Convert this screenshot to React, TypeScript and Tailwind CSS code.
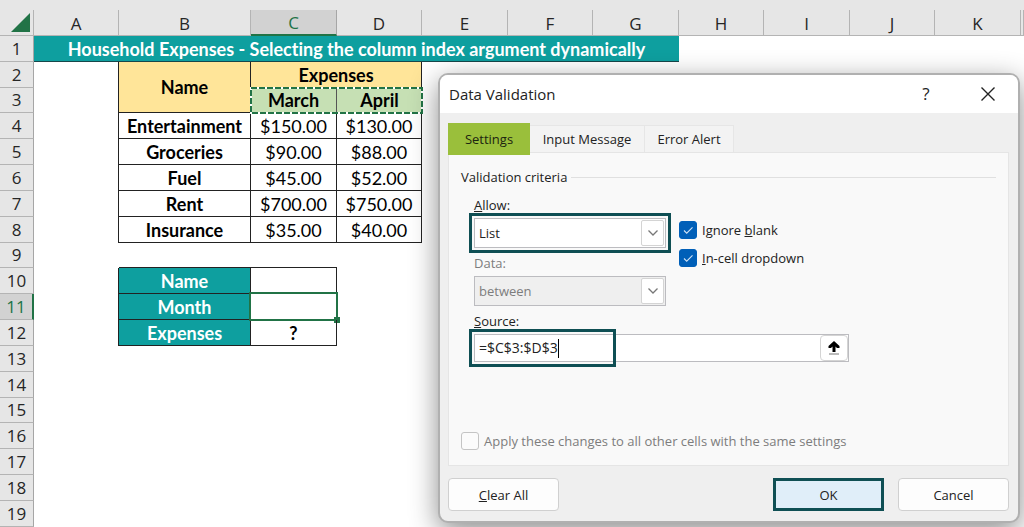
import * as React from 'react';
import { useState } from 'react';
import clsx from 'clsx';

const COLUMNS = [
  { name: 'A', width: 'w-[85px]' },
  { name: 'B', width: 'w-[132px]' },
  { name: 'C', width: 'w-[86px]' },
  { name: 'D', width: 'w-[85px]' },
  { name: 'E', width: 'w-[86px]' },
  { name: 'F', width: 'w-[85px]' },
  { name: 'G', width: 'w-[86px]' },
  { name: 'H', width: 'w-[85px]' },
  { name: 'I', width: 'w-[86px]' },
  { name: 'J', width: 'w-[85px]' },
  { name: 'K', width: 'w-[86px]' },
  { name: '', width: 'w-auto' },
];

const EXPENSES: Record<number, [string, string, string]> = {
  4: ['Entertainment', '$150.00', '$130.00'],
  5: ['Groceries', '$90.00', '$88.00'],
  6: ['Fuel', '$45.00', '$52.00'],
  7: ['Rent', '$700.00', '$750.00'],
  8: ['Insurance', '$35.00', '$40.00'],
};

const LOOKUP: Record<number, [string, string]> = {
  10: ['Name', ''],
  11: ['Month', ''],
  12: ['Expenses', '?'],
};

const line = 'border-r border-b border-[#222]';

function RowCells({ row }: { row: number }) {
  if (row === 1) {
    return (
      <>
        <td colSpan={7} className="border-b border-[#17474a] bg-[#0e9f9f] p-0 text-center font-bold text-white">
          Household Expenses - Selecting the column index argument dynamically
        </td>
        <td colSpan={5} />
      </>
    );
  }
  if (row === 2) {
    return (
      <>
        <td className="border-r border-[#222]" />
        <td rowSpan={2} className={clsx(line, 'bg-[#ffe599] p-0 font-bold')}>Name</td>
        <td colSpan={2} className="border-r border-[#222] bg-[#ffe599] p-0 font-bold">Expenses</td>
        <td colSpan={8} />
      </>
    );
  }
  if (row === 3) {
    return (
      <>
        <td className="border-r border-[#222]" />
        <td colSpan={2} className="relative p-0 font-bold">
          <div className="flex h-full bg-[#c6e0b4]">
            <span className="h-[25px] flex-1 border-r border-[#555]">March</span>
            <span className="h-[25px] flex-1">April</span>
          </div>
          {/* marching ants around the copied range */}
          <svg className="absolute inset-0 h-full w-full overflow-visible" aria-hidden="true">
            <rect width="100%" height="100%" fill="none" stroke="#fff" strokeWidth="2" />
            <rect width="100%" height="100%" fill="none" stroke="#217346" strokeWidth="2" strokeDasharray="6 2" />
          </svg>
        </td>
        <td colSpan={8} />
      </>
    );
  }
  if (EXPENSES[row]) {
    const [name, march, april] = EXPENSES[row];
    return (
      <>
        <td className="border-r border-[#222]" />
        <td className={clsx(line, 'p-0 font-bold')}>{name}</td>
        <td className={clsx(line, 'p-0')}>{march}</td>
        <td className={clsx(line, 'p-0')}>{april}</td>
        <td colSpan={8} />
      </>
    );
  }
  if (LOOKUP[row]) {
    const [name, value] = LOOKUP[row];
    return (
      <>
        <td className="border-r border-[#222]" />
        <td className={clsx(line, 'bg-[#0e9f9f] p-0 font-bold text-white')}>{name}</td>
        <td className={clsx(line, 'relative p-0 font-bold')}>
          {value}
          {row === 11 && (
            <span className="absolute -inset-x-0.5 -top-0.5 -bottom-0.5 border-2 border-[#217346]">
              <span className="absolute -right-1 -bottom-1 size-1.5 bg-[#217346]" />
            </span>
          )}
        </td>
        <td colSpan={9} />
      </>
    );
  }
  if (row === 9) {
    return (
      <>
        <td />
        <td colSpan={2} className="border-b border-[#222]" />
        <td colSpan={9} />
      </>
    );
  }
  return <td colSpan={12} />;
}

function Sheet() {
  return (
    <div className="overflow-hidden bg-[#e6e6e6] pt-[10px]">
      <table className="w-full table-fixed border-separate border-spacing-0 bg-white text-center font-['Lato',sans-serif] text-[18px] leading-6 text-black [font-variant-ligatures:none]">
        <colgroup>
          <col className="w-[34px]" />
          {COLUMNS.map(col => (
            <col key={col.name} className={col.width} />
          ))}
        </colgroup>
        <thead className="font-['Open_Sans',sans-serif] text-[17px]">
          <tr className="h-[26px] bg-[#e6e6e6]">
            <th className="border-r border-b border-[#b4b4b4] p-0">
              <svg className="mr-[3px] ml-auto size-[19px]" viewBox="0 0 19 19" aria-hidden="true">
                <path d="M19 0V19H0Z" fill="#217346" />
              </svg>
            </th>
            {COLUMNS.map(col => (
              <th
                key={col.name}
                scope="col"
                className={clsx(
                  'border-r px-0 pt-0.5 pb-0 leading-[22px] font-normal',
                  col.name === 'C'
                    ? 'border-b-2 border-r-[#a6a6a6] border-b-[#217346] bg-[#d2d2d2] text-[#217346]'
                    : 'border-b border-[#b4b4b4] text-[#262626]'
                )}
              >
                {col.name}
              </th>
            ))}
          </tr>
        </thead>
        <tbody>
          {Array.from({ length: 19 }, (_, i) => i + 1).map(row => (
            <tr key={row} className={row % 6 === 3 ? 'h-[25px]' : 'h-[26px]'}>
              <th
                scope="row"
                className={clsx(
                  "border-b border-b-[#b4b4b4] p-0 font-['Open_Sans',sans-serif] text-[17px] font-normal",
                  row === 11
                    ? 'border-r-2 border-r-[#217346] bg-[#d2d2d2] text-[#217346]'
                    : 'border-r border-r-[#a6a6a6] bg-[#e6e6e6] text-[#262626]'
                )}
              >
                {row}
              </th>
              <RowCells row={row} />
            </tr>
          ))}
        </tbody>
      </table>
    </div>
  );
}

function DropDown({ id, options, disabled, highlighted }: { id: string; options: string[]; disabled?: boolean; highlighted?: boolean }) {
  return (
    <div className={clsx('relative w-48', highlighted && 'outline-3 outline-offset-2 outline-[#0f4f54]')}>
      <select
        id={id}
        disabled={disabled}
        className={clsx(
          'block h-[30px] w-full appearance-none border border-[#bcbcc0] pl-1 opacity-100',
          disabled ? 'bg-[#efefef] text-[#7d7d7d]' : 'bg-white text-[#222]'
        )}
      >
        {options.map(option => (
          <option key={option}>{option}</option>
        ))}
      </select>
      <span className="pointer-events-none absolute top-0.5 right-0.5 bottom-0.5 flex w-[23px] items-center justify-center rounded-xs border border-[#d4d4d4] bg-white">
        <svg className="h-[6px] w-[10px]" viewBox="0 0 10 6" fill="none" stroke="#777" strokeWidth="1.3" aria-hidden="true">
          <path d="M0.5 0.5L5 5L9.5 0.5" />
        </svg>
      </span>
    </div>
  );
}

function CheckBox({ id, children, disabled, defaultChecked }: { id: string; children: React.ReactNode; disabled?: boolean; defaultChecked?: boolean }) {
  return (
    <label htmlFor={id} className={clsx('flex items-center gap-[5px]', disabled && 'text-[#7d7d7d]')}>
      <span className="relative size-[18px]">
        <input
          id={id}
          type="checkbox"
          disabled={disabled}
          defaultChecked={defaultChecked}
          className="peer block size-[18px] appearance-none rounded-[3px] border border-[#c4c4c4] bg-[#fbfbfb] checked:border-[#005fb8] checked:bg-[#005fb8]"
        />
        <svg
          className="pointer-events-none absolute inset-0 hidden size-[18px] peer-checked:block"
          viewBox="0 0 18 18"
          fill="none"
          stroke="#cfe2f5"
          strokeWidth="1.1"
          aria-hidden="true"
        >
          <path d="M5 9.5L7.7 12.2L13.5 6.3" />
        </svg>
      </span>
      <span className="pt-px">{children}</span>
    </label>
  );
}

function DialogButton({ children, primary }: { children: React.ReactNode; primary?: boolean }) {
  return (
    <button
      type="button"
      className={clsx(
        'h-[33px] w-[111px]',
        primary ? 'border-[3px] border-[#0f4f54] bg-[#e0eef9]' : 'rounded-sm border border-[#d0d0d0] bg-[#fdfdfd]'
      )}
    >
      {children}
    </button>
  );
}

function DataValidationDialog() {
  const [source, setSource] = useState('=$C$3:$D$3');
  return (
    <div
      role="dialog"
      aria-labelledby="dialog-title"
      className="absolute top-[73px] right-1 w-[582px] overflow-hidden rounded-[10px] border-2 border-[#b0b0b0] bg-[#efefef] font-['Open_Sans',sans-serif] text-[13px] leading-5 text-[#222] shadow-[0_8px_28px_rgba(0,0,0,0.45)]"
    >
      <header className="flex h-[38px] items-center bg-white pr-[23px] pl-[9px]">
        <h1 id="dialog-title" className="flex-1 text-[15px]">Data Validation</h1>
        <button type="button" className="w-4 text-[17px]">?</button>
        <button type="button" aria-label="Close" className="ml-[47px]">
          <svg className="size-[14px]" viewBox="0 0 14 14" stroke="#222" strokeWidth="1.4" aria-hidden="true">
            <path d="M0.5 0.5L13.5 13.5M13.5 0.5L0.5 13.5" />
          </svg>
        </button>
      </header>

      <div className="pt-[10px] pr-[9px] pb-[10px] pl-2">
        <div role="tablist" className="relative z-10 flex items-end">
          <button type="button" role="tab" aria-selected="true" className="-mb-[3px] h-8 w-[82px] bg-[#9abf3b] text-[#1c2410]">
            Settings
          </button>
          <button type="button" role="tab" className="h-[27px] w-[115px] border-t border-r border-[#e6e6e6] bg-[#f3f3f3]">
            Input Message
          </button>
          <button type="button" role="tab" className="h-[27px] w-[89px] border-t border-r border-[#e6e6e6] bg-[#f3f3f3]">
            Error Alert
          </button>
        </div>

        <div role="tabpanel" className="mb-3 border border-[#e5e5e5] bg-[#f9f9f9] px-3 pt-[14px] pb-[14px]">
          <div className="flex items-center gap-1">
            <h2>Validation criteria</h2>
            <hr className="flex-1 border-[#e0e0e0]" />
          </div>

          <div className="mt-2 flex gap-[13px] pl-[13px]">
            <div className="flex flex-col gap-[5px]">
              <div className="flex flex-col gap-[3px]">
                <label htmlFor="allow"><u>A</u>llow:</label>
                <DropDown id="allow" options={['List', 'Any value', 'Whole number']} highlighted />
              </div>
              <div className="flex flex-col gap-[3px]">
                <label htmlFor="data" className="text-[#7d7d7d]">Data:</label>
                <DropDown id="data" options={['between', 'not between']} disabled />
              </div>
            </div>
            <div className="flex flex-col gap-[7px] pt-6">
              <CheckBox id="ignore-blank" defaultChecked>Ignore <u>b</u>lank</CheckBox>
              <CheckBox id="in-cell" defaultChecked><u>I</u>n-cell dropdown</CheckBox>
            </div>
          </div>

          <div className="mt-[5px] flex flex-col gap-[3px] pl-[13px]">
            <label htmlFor="source"><u>S</u>ource:</label>
            <div className="relative flex h-7 w-[375px] border border-[#bcbcc0] bg-white">
              <div className="flex flex-1 items-center pl-1 text-[14px]">
                <input
                  id="source"
                  value={source}
                  onChange={e => setSource(e.target.value)}
                  className="field-sizing-content bg-transparent outline-none"
                />
                <span className="h-[19px] w-px bg-black" />
              </div>
              <button type="button" aria-label="Collapse dialog" className="flex w-7 items-center justify-center rounded-sm border border-[#d4d4d4] bg-white">
                <svg className="h-[14px] w-[12px]" viewBox="0 0 12 14" aria-hidden="true">
                  <path d="M6 0L11.5 5V7H9L7.5 5.5V11H4.5V5.5L3 7H0.5V5Z" fill="#000" />
                  <path d="M1 13H11" stroke="#777" />
                </svg>
              </button>
              <span className="pointer-events-none absolute -top-1.5 -left-1.5 h-[38px] w-[147px] border-3 border-[#0f4f54]" />
            </div>
          </div>

          <div className="mt-[68px]">
            <CheckBox id="apply-all" disabled>Apply these changes to all other cells with the same settings</CheckBox>
          </div>
        </div>

        <div className="flex gap-[14px]">
          <DialogButton><u>C</u>lear All</DialogButton>
          <div className="flex-1" />
          <DialogButton primary>OK</DialogButton>
          <DialogButton>Cancel</DialogButton>
        </div>
      </div>
    </div>
  );
}

export default function App() {
  return (
    <main className="relative h-screen overflow-hidden bg-white">
      <Sheet />
      <DataValidationDialog />
    </main>
  );
}
